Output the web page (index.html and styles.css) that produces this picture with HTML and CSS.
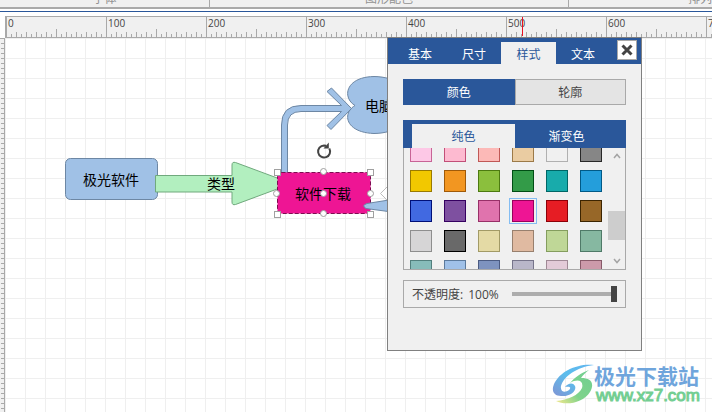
FILE: index.html
```html
<!DOCTYPE html>
<html lang="zh-CN">
<head>
<meta charset="utf-8">
<title>图形配色</title>
<link rel="stylesheet" href="styles.css">
</head>
<body>
<header class="ribbon">
  <div class="group group-font"><span>字体</span></div>
  <div class="group group-colors"><span>图形配色</span></div>
  <div class="group group-arrange"><span>排列</span></div>
</header>
<div class="ruler">
  <span class="mark">0</span><span class="mark">100</span><span class="mark">200</span><span class="mark">300</span><span class="mark">400</span><span class="mark">500</span><span class="mark">600</span><span class="mark">700</span>
  <i class="cursor"></i>
</div>
<main class="workspace">
  <div class="side-ruler"></div>
  <div class="canvas">
    <svg class="diagram" viewBox="5 38 707 374" width="707" height="374">
      <g class="blue">
        <rect x="65.500" y="158.500" width="92" height="41" rx="5"/>
        <path d="M355 105.500C342 98 345 77 374 76.500C385 76.500 395 80 402 84V126C395 130 385 133.500 374 133.500C345 132.500 342 113 355 105.500Z"/>
        <path d="M281.500 173V125Q281.500 105.500 301 105.500H341.500L327 91.500L331.500 88L351.500 108.500L331 129.500L327 125.500L341.500 111.500H301Q287.500 111.500 287.500 125V173Z"/>
      </g>
      <path class="green" d="M155.500 175.500H232V165Q232 161.500 235.500 162.500L292 183.500L235.500 204.500Q232 205.500 232 202V192H155.500Z"/>
      <rect class="pink" x="277.500" y="172.500" width="93" height="41" rx="4"/>
      <g class="labels">
        <text x="111" y="185">极光软件</text>
        <text x="221" y="189">类型</text>
        <text x="379" y="111">电脑</text>
        <text x="323" y="199">软件下载</text>
      </g>
      <path class="blue" d="M392 199.500L367 203.500Q361 205.500 366 208.500L392 212Z"/>
      <path class="callout" d="M390 184L380.500 193.500L390 203Z"/>
      <g class="handles">
        <rect x="274.500" y="169.500" width="6" height="6"/>
        <rect x="367.500" y="169.500" width="6" height="6"/>
        <rect x="274.500" y="211.500" width="6" height="6"/>
        <rect x="367.500" y="211.500" width="6" height="6"/>
        <circle cx="323.500" cy="171.500" r="3"/>
        <circle cx="276.500" cy="193.500" r="3"/>
        <circle cx="370.500" cy="193.500" r="3"/>
        <circle cx="323.500" cy="213.500" r="3"/>
        <circle cx="323.500" cy="193.500" r="3"/>
      </g>
      <g class="rotate">
        <path class="ring" d="M329.300 148.500A6 6 0 1 1 324 145.500L326 145.800"/>
        <path class="tip" d="M328.800 142.500V148.500H323.500Z"/>
      </g>
    </svg>
    <div class="brand">
      <svg class="brand-logo" viewBox="0 0 42 40" width="42" height="40">
        <defs>
          <linearGradient id="sky" x1="1" y1="0" x2="0" y2="1"><stop offset="0" stop-color="#62b5f0"/><stop offset=".5" stop-color="#5cbdec"/><stop offset="1" stop-color="#8094d4"/></linearGradient>
          <linearGradient id="leaf" x1="0" y1="1" x2="1" y2="0"><stop offset="0" stop-color="#f5e88d"/><stop offset=".4" stop-color="#7fd38b"/><stop offset="1" stop-color="#70ce92"/></linearGradient>
        </defs>
        <path fill="url(#sky)" d="M42 1C26-1 8 7 2 20C-1 27 2 32 9 32C18 33 25 27 23 22C21 18 16 19 13 23C17 22 20 23 17 26C13 29 8 28 9 22C12 12 25 3 42 1Z"/>
        <path fill="url(#leaf)" d="M37 6C29 9 22 14 18 19C26 14 32 17 30 24C27 31 16 36 4 37C14 42 31 39 38 28C43 19 39 14 29 14C31 11 34 8 37 6Z"/>
      </svg>
      <div class="brand-text">
        <strong>极光下载站</strong>
        <span>www.xz7.com</span>
      </div>
    </div>
  </div>
  <section class="panel">
    <div class="panel-head">
      <nav class="tabs">
        <button type="button">基本</button>
        <button type="button">尺寸</button>
        <button type="button" class="active">样式</button>
        <button type="button">文本</button>
      </nav>
      <button type="button" class="close" aria-label="关闭">
        <svg viewBox="0 0 18 18" width="18" height="18"><path d="M4.500 4.500L13.500 13.500M13.500 4.500L4.500 13.500"/></svg>
      </button>
    </div>
    <div class="panel-body">
      <div class="switch">
        <button type="button" class="active">颜色</button>
        <button type="button">轮廓</button>
      </div>
      <div class="picker">
        <div class="picker-tabs">
          <button type="button" class="active">纯色</button>
          <button type="button">渐变色</button>
        </div>
        <div class="picker-body">
          <div class="swatches">
            <input type="radio" name="fill" aria-label="浅粉" class="c1">
            <input type="radio" name="fill" aria-label="粉" class="c2">
            <input type="radio" name="fill" aria-label="浅红" class="c3">
            <input type="radio" name="fill" aria-label="浅橙" class="c4">
            <input type="radio" name="fill" aria-label="浅灰" class="c5">
            <input type="radio" name="fill" aria-label="中灰" class="c6">
            <input type="radio" name="fill" aria-label="黄" class="c7">
            <input type="radio" name="fill" aria-label="橙" class="c8">
            <input type="radio" name="fill" aria-label="草绿" class="c9">
            <input type="radio" name="fill" aria-label="绿" class="c10">
            <input type="radio" name="fill" aria-label="青" class="c11">
            <input type="radio" name="fill" aria-label="天蓝" class="c12">
            <input type="radio" name="fill" aria-label="蓝" class="c13">
            <input type="radio" name="fill" aria-label="紫" class="c14">
            <input type="radio" name="fill" aria-label="玫瑰" class="c15">
            <input type="radio" name="fill" aria-label="品红" class="c16" checked>
            <input type="radio" name="fill" aria-label="红" class="c17">
            <input type="radio" name="fill" aria-label="棕" class="c18">
            <input type="radio" name="fill" aria-label="银" class="c19">
            <input type="radio" name="fill" aria-label="深灰" class="c20">
            <input type="radio" name="fill" aria-label="米黄" class="c21">
            <input type="radio" name="fill" aria-label="肤色" class="c22">
            <input type="radio" name="fill" aria-label="淡绿" class="c23">
            <input type="radio" name="fill" aria-label="灰绿" class="c24">
            <input type="radio" name="fill" aria-label="灰青" class="c25">
            <input type="radio" name="fill" aria-label="淡蓝" class="c26">
            <input type="radio" name="fill" aria-label="灰蓝" class="c27">
            <input type="radio" name="fill" aria-label="灰紫" class="c28">
            <input type="radio" name="fill" aria-label="淡紫" class="c29">
            <input type="radio" name="fill" aria-label="灰粉" class="c30">
          </div>
          <div class="scrollbar">
            <svg viewBox="0 0 8 6" width="8" height="6"><path d="M1 5L4 1.500L7 5"/></svg>
            <i class="thumb"></i>
            <svg viewBox="0 0 8 6" width="8" height="6"><path d="M1 1L4 4.500L7 1"/></svg>
          </div>
        </div>
      </div>
      <div class="opacity">
        <label for="opacity">不透明度:</label>
        <output for="opacity">100%</output>
        <input type="range" id="opacity" min="0" max="100" value="100">
      </div>
    </div>
  </section>
</main>
</body>
</html>
```
FILE: styles.css
```css
* { box-sizing: border-box; }

body {
  margin: 0;
  min-height: 100vh;
  display: flex;
  flex-direction: column;
  overflow: hidden;
  background: #fff;
  color: #444;
  font: 12px/16px "Open Sans", "Noto Sans CJK SC", sans-serif;
}

button {
  margin: 0;
  padding: 0;
  border: 0;
  background: none;
  color: inherit;
  font: inherit;
}

/* Ribbon */
.ribbon {
  display: flex;
  height: 9px;
  background: #f0f0f0;
  border-bottom: 2px solid #a9a9a9;
  overflow: hidden;
  color: #929292;
}
.group {
  display: flex;
  align-items: flex-end;
  justify-content: center;
  white-space: nowrap;
  border-right: 1px solid #a9a9a9;
}
.group-font { width: 210px; }
.group-colors { width: 359px; }
.group-arrange { flex: 1; border: 0; justify-content: flex-end; }

/* Rulers */
.ruler {
  position: relative;
  display: flex;
  height: 22px;
  margin: 7px 0 0 5px;
  border: solid #a9a9a9;
  border-width: 1px 0 1px 1px;
  background: #f0f0f0;
  overflow: hidden;
  font-size: 10px;
  line-height: 12px;
}
.ruler::before {
  content: "";
  position: fixed;
  left: 0;
  right: 0;
  top: 11px;
  height: 1px;
  background: #2a579a;
}
.mark {
  flex: none;
  width: 100px;
  padding-left: 1px;
  border-left: 1px solid #a9a9a9;
  background-image:
    linear-gradient(#a9a9a9, #a9a9a9),
    repeating-linear-gradient(to right, #a9a9a9 0 1px, transparent 1px 10px),
    repeating-linear-gradient(to right, #a9a9a9 0 1px, transparent 1px 5px);
  background-size: 1px 8px, 100px 5px, 100px 3px;
  background-position: 50px 100%, 0 100%, 0 100%;
  background-repeat: no-repeat;
  background-origin: border-box;
}
.cursor {
  position: absolute;
  left: 516px;
  top: 0;
  width: 1px;
  height: 19px;
  background: #e81123;
}
.workspace {
  position: relative;
  display: flex;
  flex: 1;
}
.side-ruler {
  width: 5px;
  border-top: 1px solid #a9a9a9;
  border-right: 1px solid #a9a9a9;
  background: repeating-linear-gradient(transparent 0 4px, #a9a9a9 4px 5px) 1px 0 / 3px 100% no-repeat #f0f0f0;
}

/* Canvas */
.canvas {
  position: relative;
  flex: 1;
  overflow: hidden;
  background:
    linear-gradient(to right, #efefef 1px, transparent 1px) 0 0 / 20px 20px,
    linear-gradient(#efefef 1px, transparent 1px) 0 0 / 20px 20px;
}
.diagram { display: block; }
.blue { fill: #a0c1e6; stroke: #6d87a4; }
.green { fill: #b2efbf; stroke: #70a97d; }
.pink { fill: #ee1594; stroke: #7d0c50; stroke-dasharray: 4 2; }
.labels { fill: #000; font-size: 14px; text-anchor: middle; }
.callout { fill: #fff; stroke: #bdbdbd; }
.handles { fill: #fff; stroke: #a0a0a0; }
.ring { fill: none; stroke: #444; stroke-width: 2; }
.tip { fill: #444; }

.brand {
  position: absolute;
  right: 12px;
  bottom: 8px;
  display: flex;
  align-items: center;
}
.brand-text {
  display: flex;
  flex-direction: column;
}
.brand-text strong {
  color: #6fa5dc;
  font-size: 21px;
  line-height: 24px;
}
.brand-text span {
  padding-left: 2px;
  color: #73ce92;
  font: 17px/16px "Liberation Sans", sans-serif;
  -webkit-text-stroke: 1px #73ce92;
}

/* Style panel */
.panel {
  position: absolute;
  left: 387px;
  top: -1px;
  width: 255px;
  background: #f0f0f0;
  border: 1px solid #808080;
}
.panel-head {
  display: flex;
  justify-content: space-between;
  height: 26px;
  padding: 0 4px 0 5px;
  background: #2a579a;
  color: #fff;
}
.tabs { display: flex; padding: 4px 0 0; }
.tabs button { width: 54px; padding-top: 3px; }
.tabs .active,
.picker-tabs .active { background: #f0f0f0; color: #2a579a; }
.tabs .active { width: 55px; }
.close {
  width: 20px;
  height: 20px;
  margin-top: 2px;
  border: 1px solid #a9a9a9;
  background: #fff;
}
.close svg { display: block; fill: none; stroke: #444; stroke-width: 3; }
.panel-body {
  display: flex;
  flex-direction: column;
  padding: 15px 15px 42px;
}
.switch {
  display: grid;
  grid-template-columns: 1fr 1fr;
  height: 26px;
}
.switch button { padding-top: 2px; border: 1px solid #a9a9a9; background: #e4e4e4; }
.switch .active { background: #2a579a; border-color: #2a579a; color: #fff; }

.picker { margin-top: 15px; }
.picker-tabs {
  display: grid;
  grid-template-columns: 103px 1fr;
  height: 28px;
  padding: 4px 8px 0 9px;
  background: #2a579a;
  color: #fff;
}
.picker-tabs button { padding-top: 2px; }
.picker-body {
  display: flex;
  justify-content: space-between;
  height: 122px;
  border: 1px solid #a9a9a9;
  border-top: 0;
  overflow: hidden;
}
.swatches {
  display: grid;
  grid-template-columns: repeat(6, 22px);
  grid-auto-rows: 22px;
  gap: 8px 12px;
  margin: -8px 0 0 6px;
}
.swatches input {
  appearance: none;
  margin: 0;
  border-width: 1px;
  border-style: solid;
}
.swatches input:checked { position: relative; }
.swatches input:checked::after {
  content: "";
  position: absolute;
  inset: -3px -4px;
  border: 1px solid #84bdf2;
}
.c1 { background: #fdc8e6; border-color: #c86496; }
.c2 { background: #fdbad0; border-color: #c25078; }
.c3 { background: #fcb9b7; border-color: #c05856; }
.c4 { background: #eacca2; border-color: #9c7a48; }
.c5 { background: #f0f0f0; border-color: #b0b0b0; }
.c6 { background: #868686; border-color: #282828; }
.c7 { background: #f2c800; border-color: #9a7a00; }
.c8 { background: #f29621; border-color: #a05a08; }
.c9 { background: #8bbf3d; border-color: #4c7a10; }
.c10 { background: #339b48; border-color: #004d14; }
.c11 { background: #18abab; border-color: #006666; }
.c12 { background: #249edb; border-color: #005a87; }
.c13 { background: #4169e1; border-color: #000f78; }
.c14 { background: #7e50a0; border-color: #350060; }
.c15 { background: #e073ad; border-color: #983068; }
.c16 { background: #ee1594; border-color: #98005a; }
.c17 { background: #e61d24; border-color: #8c0008; }
.c18 { background: #976728; border-color: #3c2400; }
.c19 { background: #d6d5d6; border-color: #8e8e8e; }
.c20 { background: #696969; border-color: #000; }
.c21 { background: #e4daa5; border-color: #a29a66; }
.c22 { background: #e0baa1; border-color: #98806e; }
.c23 { background: #bfd797; border-color: #849d5e; }
.c24 { background: #86b8a1; border-color: #4f7a68; }
.c25 { background: #87bcba; border-color: #527f7d; }
.c26 { background: #a0c1e8; border-color: #5c7a9c; }
.c27 { background: #7e93bf; border-color: #4b5b82; }
.c28 { background: #b9b7c9; border-color: #76748a; }
.c29 { background: #e3cbd8; border-color: #a08a96; }
.c30 { background: #cc9aaa; border-color: #875a69; }

.scrollbar {
  display: flex;
  flex-direction: column;
  align-items: center;
  width: 17px;
  padding: 5px 0;
}
.scrollbar svg { fill: none; stroke: #a4a4a4; stroke-width: 1.5; }
.thumb {
  width: 100%;
  height: 29px;
  margin: auto 0 18px;
  background: #cdcdcd;
}

.opacity {
  display: flex;
  align-items: center;
  gap: 5px;
  height: 28px;
  margin-top: 10px;
  padding: 0 8px;
  border: 1px solid #a9a9a9;
}
.opacity label,
.opacity output { padding-top: 1px; }
.opacity input {
  appearance: none;
  flex: 1;
  min-width: 0;
  height: 16px;
  margin: 0 0 0 8px;
  background: linear-gradient(#adadad, #adadad) 0 50% / 100% 4px no-repeat;
}
.opacity input::-webkit-slider-thumb {
  appearance: none;
  width: 6px;
  height: 16px;
  background: #444;
}
```
